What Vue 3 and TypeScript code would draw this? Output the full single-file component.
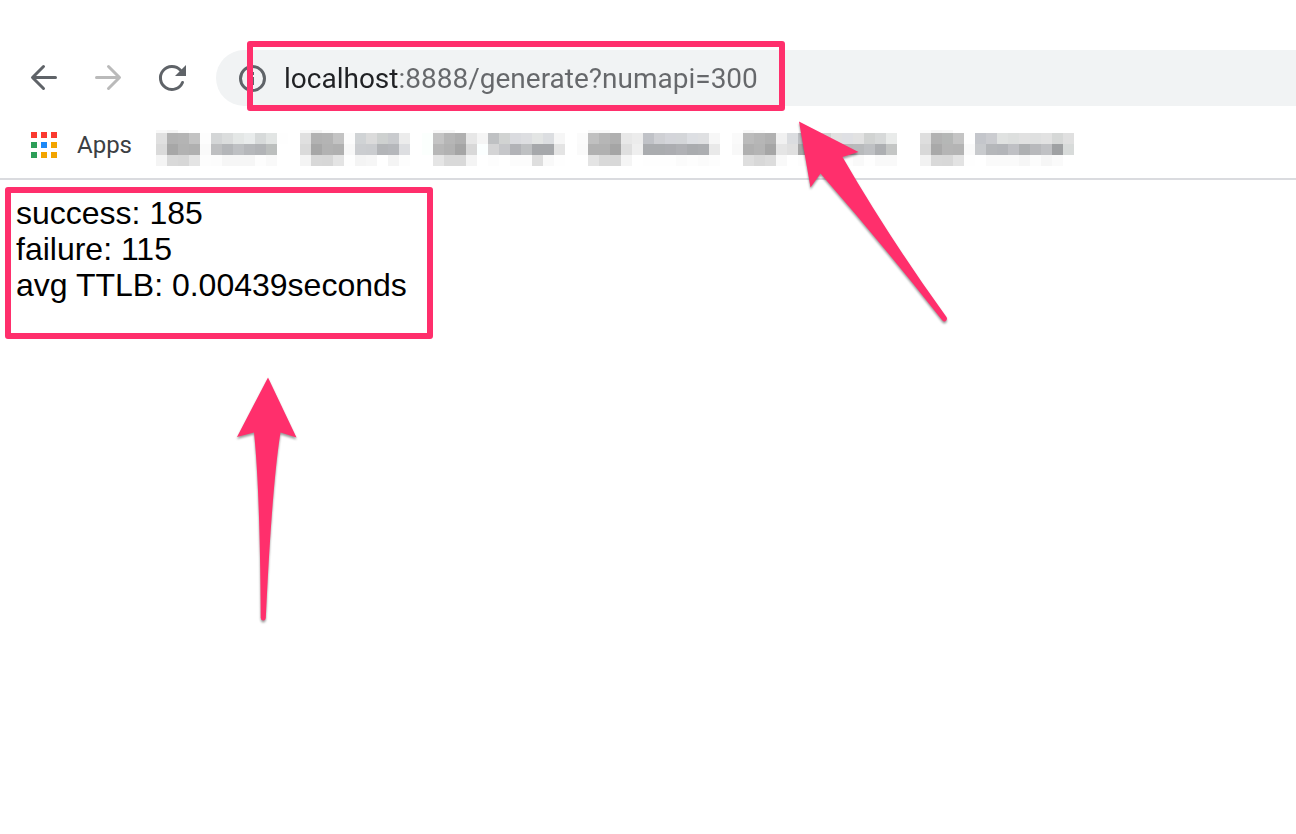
<script setup lang="ts">
import { ref } from 'vue'

interface Bookmark {
  name: string
  rows: string[]
}

const CELL = 11
const url = ref('localhost:8888/generate?numapi=300')

const appDots: string[] = [
  '#fa3a30', '#fa3a30', '#fa3a30',
  '#2e9e58', '#1e88f5', '#f2a400',
  '#2e9e58', '#f2a400', '#f2a400',
]

// Each row lists one grey or RGB value per mosaic cell.
const bookmarks: Bookmark[] = [
  {
    name: 'Bookmark 1',
    rows: [
      'f8 f4 fc ff ff ff ff ff ff ff ff ff',
      'e0 b2 b4 c3 fd d4d6d7 dbdddd e4e7e6 e9ecec d7dada e2e5e4 fe',
      'da a7 b2 b0 fa bebfc1 b4b6b9 bec0c3 b6b8bb b2b4b7 bcbfbe ff',
      'f4 d9 d7 e4 fd fc f6 f6 f6 fd f9 ff',
    ],
  },
  {
    name: 'Bookmark 2',
    rows: [
      'f9 f4 fc ff ff ff ff ff ff ff',
      'e0 b2 b4 c3 fc d0d3d5 dbdbdb ced1d0 c9cbce ec',
      'da a7 b2 b0 f8 cbcdd0 cacccf b3b5b8 b5b7bb dddee1',
      'f4 d8 d7 e4 fe f4 f6 ff f4 fd',
    ],
  },
  {
    name: 'Bookmark 3',
    rows: [
      'ff f8 f8 ff ff ff ff ff ff ff ff ff ff',
      'fbfffd c4 b6 b0 e7 f5 bfc1c3 d1d3d2 dadbdf dddee1 e3e5e4 dcdee1 f6',
      'fbfffd b7 b2 a5 d8 fbffff d4d4d5 c6c7ca b2b3b7 bec0c2 a6a8ab a6a8ab e4',
      'ff e5 d9 d9 f4 ff fd ff fc fc de f9 fe',
    ],
  },
  {
    name: 'Bookmark 4',
    rows: [
      'ff f8 f8 ff ff ff ff ff ff ff ff ff ff',
      'fb c0 b6 b0 e8 ec c0c2c7 cfd0d4 d4d5da d4d6d9 dddfe3 dfe0e2 f7',
      'fa b1 b1 a5 df ef aaacaf aaacaf acadb1 b0b1b5 aaacaf acaeb1 e9',
      'ff e4 d9 d8 f5 ff fe fe fe fb fd fb fd',
    ],
  },
  {
    name: 'Bookmark 5',
    rows: [
      'ff f8 fc ff ff ff ff ff ff ff ff ff ff ff ff ff',
      'fa bb b6 b1 f1 dbdde0 bcbec2 d0 d0d2d1 e1 dfe0e4 e2 d1d3d2 d7d9d9 e9ebea ff',
      'f8 b0 b4 a6 e5 e0 a6 b8 b8 b8 b8 b8babc bec0c3 adafb2 c4c6c5 ff',
      'ff de d8 dc f9 ff fd fd fd fd fd f9 fe f9 f9 ff',
    ],
  },
  {
    name: 'Bookmark 6',
    rows: [
      'fc f6 f8 ff ff ff ff ff ff ff ff ff ff ff',
      'de b2 b5b7b6 c4 fe c4c6cb cbccd0 e0e2e1 dddfde e1 dfe0e0 e2 d6d8d7 e0',
      'd8 a9 b5 b4 fa c8cacd b5b7ba b3b5b9 bfc0c4 aeb0b2 b8b9bc c0c1c4 9fa1a3 d8dbda',
      'f2 d9 d8 e3 fe ff fa fa fa f6 fc f6 fa ff',
    ],
  },
]

function cells(row: string): string[] {
  return row.split(' ').map((v) => '#' + (v.length === 2 ? v + v + v : v))
}

function rowTop(index: number): number {
  return index === 0 ? 0 : 3 + (index - 1) * CELL
}
</script>

<template>
  <div class="browser">
    <header class="chrome">
      <div class="toolbar">
        <nav class="nav" aria-label="Navigation">
          <button type="button" class="icon-button" aria-label="Back">
            <svg width="32" height="32" viewBox="0 0 32 32" fill="none" stroke="#5f6368" stroke-width="3" stroke-linecap="round" stroke-linejoin="round">
              <path d="M27.5 15.5H5M15.5 4.5L4.5 15.5L15.5 26.5" />
            </svg>
          </button>
          <button type="button" class="icon-button" aria-label="Forward">
            <svg width="32" height="32" viewBox="0 0 32 32" fill="none" stroke="#bababa" stroke-width="3" stroke-linecap="round" stroke-linejoin="round">
              <path d="M4.5 15.5H27M16.5 4.5L27.5 15.5L16.5 26.5" />
            </svg>
          </button>
          <button type="button" class="icon-button" aria-label="Reload">
            <svg width="32" height="32" viewBox="0 0 32 32">
              <path d="M26.5 20.5A11.5 11.5 0 1 1 24.5 8.3" fill="none" stroke="#5f6368" stroke-width="3" stroke-linecap="round" />
              <path d="M30 3V14H19Z" fill="#5f6368" />
            </svg>
          </button>
        </nav>
        <div class="omnibox">
          <button type="button" class="icon-button" aria-label="Site information">
            <svg width="32" height="32" viewBox="0 0 32 32">
              <circle cx="16.5" cy="16.5" r="12" fill="none" stroke="#5f6368" stroke-width="3" />
              <path d="M15 10H18V13H15ZM15 15H18V23H15Z" fill="#5f6368" />
            </svg>
          </button>
          <input v-model="url" class="address" type="text" aria-label="Address" spellcheck="false" />
        </div>
      </div>
      <div class="bookmarks">
        <button type="button" class="apps">
          <svg width="26" height="26" viewBox="0 0 26 26" aria-hidden="true">
            <rect v-for="(color, i) in appDots" :key="i" :x="(i % 3) * 10" :y="Math.floor(i / 3) * 10" width="6" height="6" :fill="color" />
          </svg>
          <span>Apps</span>
        </button>
        <div class="links">
          <button v-for="mark in bookmarks" :key="mark.name" type="button" class="bookmark" :aria-label="mark.name">
            <svg :width="cells(mark.rows[0]).length * CELL" height="36" shape-rendering="crispEdges">
              <g v-for="(row, r) in mark.rows" :key="r">
                <rect v-for="(color, c) in cells(row)" :key="c" :x="c * CELL" :y="rowTop(r)" :width="CELL" :height="r === 0 ? 3 : CELL" :fill="color" />
              </g>
            </svg>
          </button>
        </div>
      </div>
    </header>

    <main class="result">
      <div>success: 185</div>
      <div>failure: 115</div>
      <div>avg TTLB: 0.00439seconds</div>
    </main>

    <svg class="annotations" width="960" height="640" viewBox="0 0 960 640" aria-hidden="true">
      <g fill="none" stroke="#ff2f6c" stroke-width="6" stroke-linejoin="round">
        <rect x="250" y="44" width="532" height="64" />
        <rect x="8" y="190" width="422" height="146" />
      </g>
      <g class="arrows" fill="#ff2f6c">
        <path d="M799 121.5L858.5 152L842.5 157Q890 239 946.5 317Q948 320 945 321.5Q943.5 322 942 320Q883 245 820.5 173.5L810.5 187.5Z" />
        <path d="M268 377.5L296.5 437.5L280.5 432.5Q272 485 265.8 618Q265.5 620.5 263.3 620.5Q261 620.5 260.7 618Q260 490 254 432.5L237 437Z" />
      </g>
    </svg>
  </div>
</template>

<style>
body {
  margin: 0;
  background: #fff;
}
</style>

<style scoped>
.browser {
  position: relative;
  min-height: 100vh;
  overflow: hidden;
  background: #fff;
  font-family: "Liberation Sans", Arial, sans-serif;
}

button {
  margin: 0;
  padding: 0;
  border: 0;
  background: none;
  cursor: pointer;
}

svg {
  display: block;
}

.chrome {
  padding-top: 50px;
  border-bottom: 2px solid #dadbdf;
}

.toolbar {
  display: flex;
  align-items: center;
  gap: 28px;
  padding-left: 28px;
}

.nav {
  display: flex;
  gap: 32px;
}

.icon-button {
  flex: none;
}

.omnibox {
  display: flex;
  flex: 1;
  align-items: center;
  gap: 16px;
  height: 56px;
  padding-left: 20px;
  border-radius: 28px 0 0 28px;
  background: #f1f3f4;
}

.address {
  flex: 1;
  min-width: 0;
  height: 40px;
  padding: 0;
  border: 0;
  outline: 0;
  background: linear-gradient(to right, #202124 115px, #66686b 115px);
  background-clip: text;
  color: transparent;
  font-family: Roboto, sans-serif;
  font-size: 28px;
}

.bookmarks {
  display: flex;
  align-items: flex-start;
  gap: 24px;
  padding: 24px 0 12px 31px;
}

.apps {
  display: flex;
  align-items: center;
  gap: 20px;
  height: 30px;
  color: #3c4043;
  font-family: Roboto, sans-serif;
  font-size: 24px;
}

.links {
  display: flex;
  gap: 12px;
}

.result {
  padding: 15px 16px;
  color: #000;
  font-size: 32px;
  line-height: 36px;
}

.annotations {
  position: absolute;
  top: 0;
  left: 0;
  pointer-events: none;
}

.arrows {
  filter: drop-shadow(0 2px 1px rgba(0, 0, 0, 0.4));
}
</style>
